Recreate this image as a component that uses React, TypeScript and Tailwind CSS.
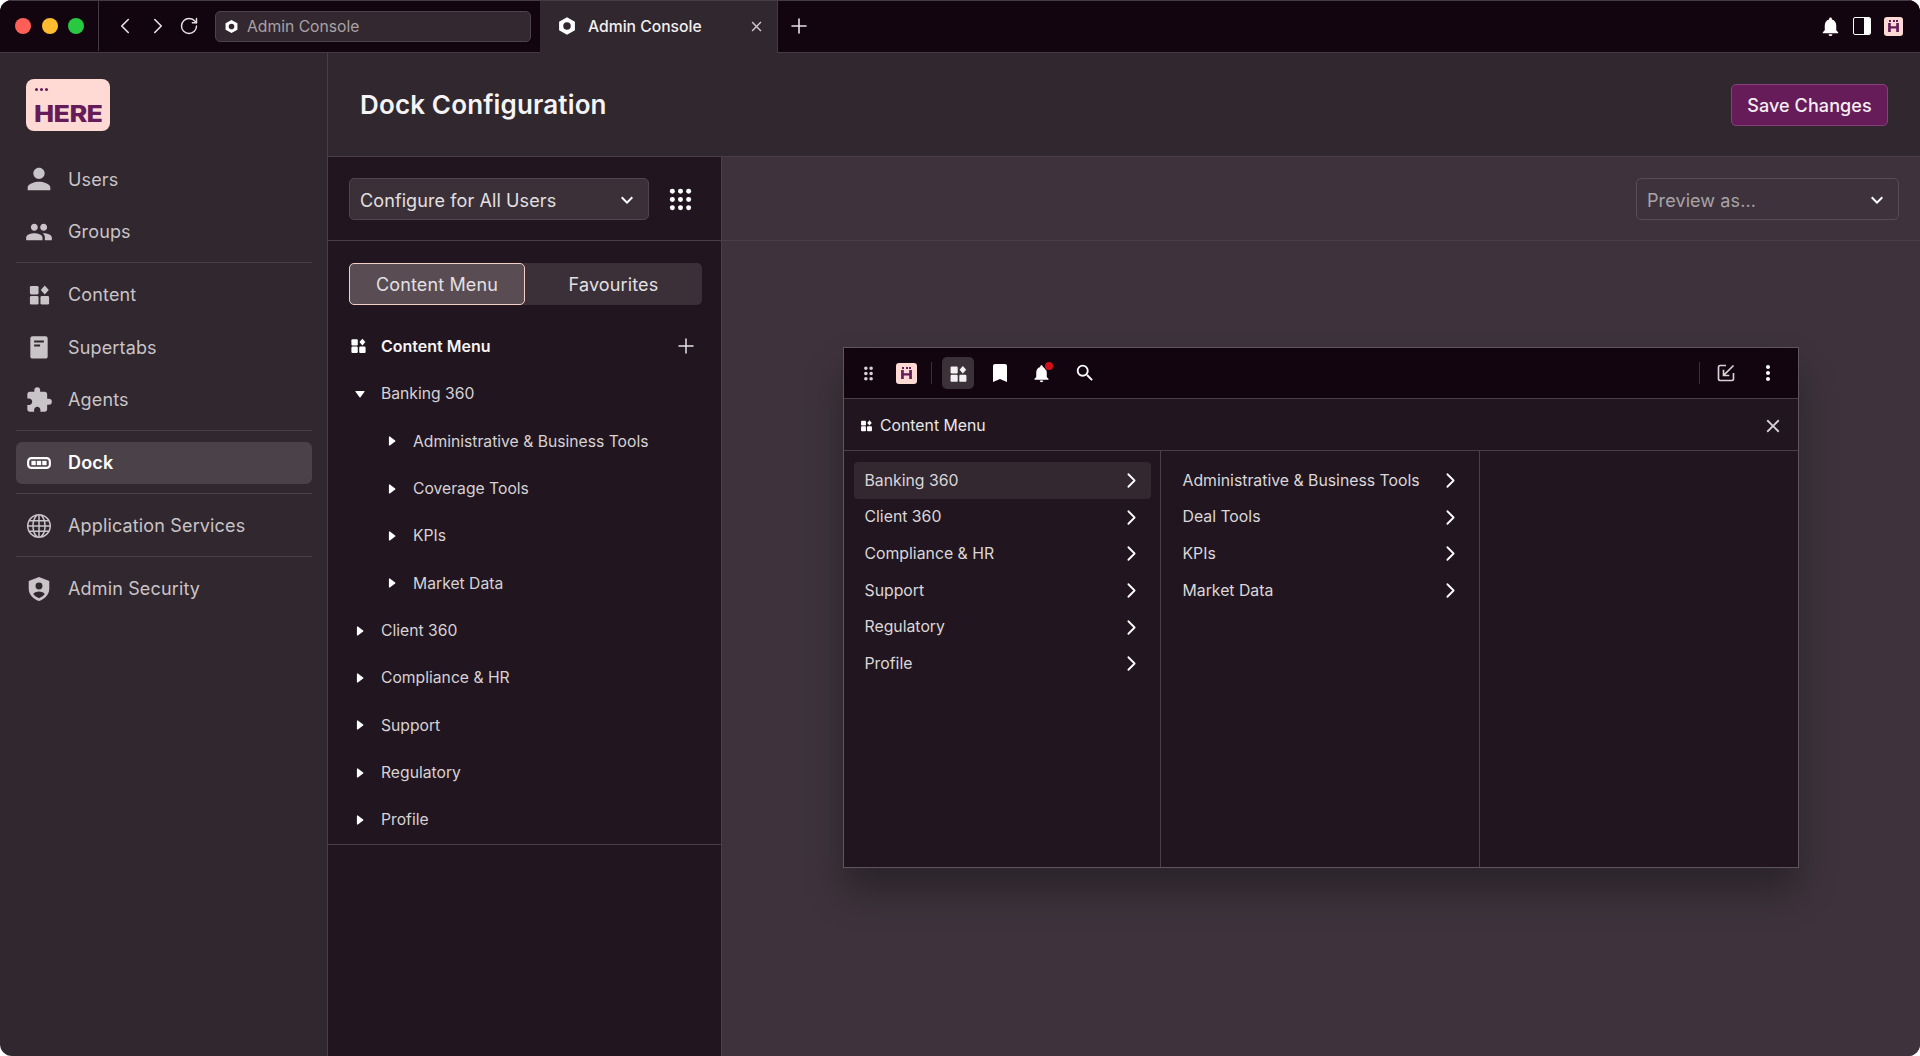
import React from "react";
import {
  MdPerson, MdPeople, MdExtension, MdBookmark, MdNotifications, MdSearch, MdMoreVert, MdDragIndicator,
  MdClose, MdKeyboardArrowDown,
} from "react-icons/md";
import { BsGlobe } from "react-icons/bs";
import { ChevronLeft, ChevronRight, Plus, RotateCw } from "lucide-react";

const Widgets = ({ className = "" }: { className?: string }) => (
  <svg viewBox="0 0 24 24" className={className} fill="currentColor">
    <rect x="2" y="3" width="9" height="9" rx="1.500" />
    <rect x="2" y="13.500" width="9" height="9" rx="1.500" />
    <rect x="13" y="13.500" width="9" height="9" rx="1.500" />
    <path d="M17.500 2.500l4.200 4.700-4.200 4.700-4.200-4.700z" />
  </svg>
);
const Hex = ({ className = "" }: { className?: string }) => (
  <svg viewBox="0 0 24 24" className={className}>
    <path fill="#fff" fillRule="evenodd" d="M12 1.500l9.500 5.300v10.400L12 22.500l-9.500-5.300V6.800zM12 7.500a4.500 4.500 0 100 9 4.500 4.500 0 000-9z" />
  </svg>
);
const Supertabs = ({ className = "" }: { className?: string }) => (
  <svg viewBox="0 0 24 24" className={className} fill="currentColor">
    <path fillRule="evenodd" d="M6 2h12a2 2 0 012 2v17a1.500 1.500 0 01-1.500 1.500h-13A1.500 1.500 0 014 21V4a2 2 0 012-2zm1.500 4v1.800h9V6zm0 3.800v1.700h5.500V9.800z" />
  </svg>
);
const DockIcon = ({ className = "" }: { className?: string }) => (
  <svg viewBox="0 0 24 24" className={className} fill="none">
    <rect x="2" y="7.500" width="20" height="9" rx="3" stroke="currentColor" strokeWidth="2" />
    <rect x="5" y="10" width="4" height="4" fill="currentColor" />
    <rect x="10" y="10" width="4" height="4" fill="currentColor" />
    <rect x="15" y="10" width="4" height="4" fill="currentColor" />
  </svg>
);
const ShieldUser = ({ className = "" }: { className?: string }) => (
  <svg viewBox="0 0 24 24" className={className} fill="currentColor">
    <path fillRule="evenodd" d="M12 1l9.500 3.500v7c0 5.500-4 9.800-9.500 11.500-5.500-1.700-9.500-6-9.500-11.500v-7zm0 5a3.200 3.200 0 100 6.400 3.200 3.200 0 000-6.400zm0 8.200c-2.500 0-4.500 1-5.300 2.500 1.200 1.700 3.100 3 5.300 3.800 2.200-.8 4.100-2.100 5.300-3.800-.8-1.500-2.800-2.500-5.300-2.500z" />
  </svg>
);
const DotGrid = ({ className = "" }: { className?: string }) => (
  <svg viewBox="0 0 24 24" className={className} fill="currentColor">
    {[3.500, 12, 20.500].flatMap((y) =>
      [3.500, 12, 20.500].map((x) => <circle key={`${x}-${y}`} cx={x} cy={y} r="2.600" />)
    )}
  </svg>
);
const Caret = ({ open }: { open?: boolean }) => (
  <svg viewBox="0 0 12 12" className="h-[12px] w-[12px] text-white" fill="currentColor" stroke="currentColor" strokeWidth="1.200" strokeLinejoin="round">
    {open ? <path d="M2 3.500h8L6 8.800z" /> : <path d="M3.500 2v8L8.800 6z" />}
  </svg>
);
const SmallLogo = ({ size }: { size: "s" | "m" }) => (
  <div className={`flex flex-col items-center justify-center rounded-[3px] bg-[#ffd9d3] ${size === "s" ? "h-[19px] w-[19px]" : "h-[21px] w-[21px]"}`}>
    <div className="mb-[1px] flex gap-[1.500px]">
      <span className="h-[2px] w-[2px] bg-[#651c59]" />
      <span className="h-[2px] w-[2px] bg-[#651c59]" />
      <span className="h-[2px] w-[2px] bg-[#651c59]" />
    </div>
    <svg viewBox="0 0 12 10" className="h-[9px] w-[11px]" fill="#651c59">
      <path d="M0 0h3v3.500h6V0h3v10H9V6H3v4H0z" />
    </svg>
  </div>
);
const Divider = () => <div className="-mt-px mb-px ml-4 mr-[15px] h-px shrink-0 bg-[#4a3f48]" />;

const NavItem = ({ icon, label, active }: { icon: React.ReactNode; label: string; active?: boolean }) => (
  <div className={`ml-4 mr-[15px] flex h-[42px] shrink-0 items-center gap-[17px] rounded-md pl-[11px] text-[18px] tracking-[0.15px] ${active ? "bg-[#4b4148] font-semibold text-white" : "text-[#c9c4c8]"}`}>
    <span className="flex h-6 w-6 shrink-0 items-center justify-center [&>svg]:shrink-0">{icon}</span>
    {label}
  </div>
);

const TreeRow = ({ label, level, open }: { label: string; level: number; open?: boolean }) => (
  <div className={`flex h-[47.330px] items-center pt-[3px] text-[15.700px] text-[#d6d2d5] ${level === 0 ? "pl-[20px]" : "pl-[52px]"}`}>
    <span className="mr-[9px] flex h-6 w-6 items-center justify-center">
      <Caret open={open} />
    </span>
    {label}
  </div>
);

const MenuRow = ({ label, active, inset }: { label: string; active?: boolean; inset?: boolean }) => (
  <div className={`flex h-[36.700px] items-center justify-between rounded-[4px] pr-[7px] text-[15.800px] text-[#dad6d9] ${inset ? "pl-[12px]" : "pl-[11px]"} ${active ? "bg-[#33282f]" : ""}`}>
    {label}
    <ChevronRight size={25} strokeWidth={1.700} className="text-white" />
  </div>
);

export default function App() {
  return (
    <div className="h-[1056px] w-[1920px] overflow-hidden bg-white font-['Inter',sans-serif]">
      <div className="flex h-full flex-col overflow-hidden rounded-[12px] bg-[#31272e]">
        {/* browser bar */}
        <div className="flex h-[53px] shrink-0 border-b border-t border-[#453b43] bg-[#130510] pb-px">
          <div className="flex w-[99px] items-center gap-[10.500px] border-r border-[#453b43] pl-[15px]">
            <span className="h-4 w-4 rounded-full bg-[#ff5f57]" />
            <span className="h-4 w-4 rounded-full bg-[#febc2e]" />
            <span className="h-4 w-4 rounded-full bg-[#28c840]" />
          </div>
          <div className="flex w-[441px] items-center">
            <ChevronLeft size={26} strokeWidth={1.500} className="ml-[13px] text-[#e5e2e4]" />
            <ChevronRight size={26} strokeWidth={1.500} className="ml-[7px] text-[#e5e2e4]" />
            <RotateCw size={20} strokeWidth={1.700} className="ml-[8px] mr-[2px] text-[#e5e2e4]" />
            <div className="ml-[14px] flex h-[31px] w-[316px] items-center gap-[8px] rounded-[5px] border border-[#4d434b] bg-[#33282f] pl-[8px] text-[15.700px] text-[#a8a2a6]">
              <Hex className="h-[15px] w-[15px]" />
              <span className="pt-[1px]">Admin Console</span>
            </div>
          </div>
          <div className="-mb-[2px] flex w-[238px] items-center justify-between border-r border-[#453b43] bg-[#31272e] pb-[2px] pl-[17px] pr-[12px] text-[15.700px] font-medium text-[#f1eff0]">
            <div className="flex items-center gap-[11px]">
              <Hex className="h-[20px] w-[20px]" />
              <span className="pt-[1px]">Admin Console</span>
            </div>
            <MdClose size={17} className="text-[#cfcbce]" />
          </div>
          <div className="ml-[9px] flex items-center">
            <Plus size={24} strokeWidth={1.600} className="text-[#e5e2e4]" />
          </div>
          <div className="ml-auto flex items-center pr-[17px]">
            <MdNotifications size={23} className="mr-[11px] text-white" />
            <span className="mr-[13px] flex h-[18px] w-[18px] overflow-hidden rounded-[2px] border-[1.500px] border-white">
              <span className="flex-1" />
              <span className="w-[6px] bg-white" />
            </span>
            <SmallLogo size="s" />
          </div>
        </div>

        <div className="flex min-h-0 flex-1">
          {/* sidebar */}
          <div className="flex w-[328px] shrink-0 flex-col gap-[10px] border-r border-[#4a3f48] pt-[26px]">
            <div className="mb-[17px] ml-[26px] flex h-[52px] w-[84px] flex-col rounded-[8px] bg-[#ffd9d3] pl-[8px] pt-[9px] text-[#651c59]">
              <div className="ml-[1px] flex gap-[2px]">
                <span className="h-[3px] w-[3px] rounded-full bg-[#651c59]" />
                <span className="h-[3px] w-[3px] rounded-full bg-[#651c59]" />
                <span className="h-[3px] w-[3px] rounded-full bg-[#651c59]" />
              </div>
              <span className="mt-[10px] origin-left scale-x-[1.170] text-[23px] font-extrabold leading-[26px] tracking-[-0.500px]">HERE</span>
            </div>
            <div className="flex flex-col gap-[10.500px]">
              <NavItem icon={<MdPerson size={34} />} label="Users" />
              <NavItem icon={<MdPeople size={28} />} label="Groups" />
            </div>
            <Divider />
            <div className="flex flex-col gap-[10.500px]">
              <NavItem icon={<Widgets className="h-[23px] w-[23px]" />} label="Content" />
              <NavItem icon={<Supertabs className="h-[26px] w-[26px]" />} label="Supertabs" />
              <NavItem icon={<MdExtension size={28} />} label="Agents" />
            </div>
            <Divider />
            <NavItem active icon={<DockIcon className="h-[26px] w-[26px] text-white" />} label="Dock" />
            <Divider />
            <NavItem icon={<BsGlobe size={24} />} label="Application Services" />
            <Divider />
            <NavItem icon={<ShieldUser className="h-[26px] w-[26px]" />} label="Admin Security" />
          </div>

          <div className="flex min-w-0 flex-1 flex-col">
            {/* header */}
            <div className="flex h-[104px] shrink-0 items-center justify-between border-b border-[#4a3f48] pl-[32px] pr-[32px]">
              <h1 className="text-[26px] font-semibold tracking-[0.15px] text-[#f5f3f4]">Dock Configuration</h1>
              <button className="flex h-[42px] w-[157px] items-center justify-center rounded-[5px] border border-[#8a3f7d] bg-[#661c58] pt-[2px] text-[18px] font-medium tracking-[0.1px] text-[#f5eef4]">
                Save Changes
              </button>
            </div>

            <div className="flex min-h-0 flex-1">
              {/* left panel */}
              <div className="flex w-[394px] shrink-0 flex-col border-r border-[#4a3f48] bg-[#21161f]">
                <div className="flex h-[84px] shrink-0 items-center border-b border-[#4a3f48] pl-[21px]">
                  <div className="flex h-[42px] w-[300px] items-center justify-between rounded-[5px] border border-[#50454d] bg-[#3b2f38] pl-[10px] pr-[9px] pt-[2px] text-[18px] tracking-[0.1px] text-[#e3e0e2]">
                    <span className="pt-[1px]">Configure for All Users</span>
                    <MdKeyboardArrowDown size={24} className="text-white" />
                  </div>
                  <DotGrid className="ml-[20px] mt-[2px] h-[23px] w-[23px] text-white" />
                </div>
                <div className="ml-[21px] mt-[22px] flex h-[42px] w-[353px] shrink-0 rounded-[5px] bg-[#3b2f38] text-[18px] tracking-[0.15px] text-[#e3e0e2]">
                  <div className="flex w-[176px] items-center justify-center rounded-[5px] border border-[#f2cfc9] bg-[#5a4c53]">Content Menu</div>
                  <div className="flex flex-1 items-center justify-center">Favourites</div>
                </div>
                <div className="mt-[17px] flex h-[47px] shrink-0 items-center pl-[22px] pr-[23px] text-[16px] font-semibold text-[#f5f3f4]">
                  <Widgets className="h-[17px] w-[17px] text-white" />
                  <span className="ml-[14px] flex-1">Content Menu</span>
                  <Plus size={24} strokeWidth={1.500} className="text-[#e5e2e4]" />
                </div>
                <div className="border-b border-[#4a3f48] pb-[2px]">
                  <TreeRow level={0} open label="Banking 360" />
                  <TreeRow level={1} label="Administrative & Business Tools" />
                  <TreeRow level={1} label="Coverage Tools" />
                  <TreeRow level={1} label="KPIs" />
                  <TreeRow level={1} label="Market Data" />
                  <TreeRow level={0} label="Client 360" />
                  <TreeRow level={0} label="Compliance & HR" />
                  <TreeRow level={0} label="Support" />
                  <TreeRow level={0} label="Regulatory" />
                  <TreeRow level={0} label="Profile" />
                </div>
              </div>

              {/* preview */}
              <div className="flex min-w-0 flex-1 flex-col bg-[#3e333c]">
                <div className="flex h-[84px] shrink-0 items-center justify-end border-b border-[#4a3f48] pr-[21px]">
                  <div className="flex h-[42px] w-[263px] items-center justify-between rounded-[5px] border border-[#574d55] pl-[10px] pr-[9px] pt-[2px] text-[18px] tracking-[0.1px] text-[#a9a3a7]">
                    <span className="pt-[1px]">Preview as...</span>
                    <MdKeyboardArrowDown size={24} className="text-white" />
                  </div>
                </div>
                <div className="pl-[121px] pt-[106px]">
                  <div className="flex h-[521px] w-[956px] flex-col border border-[#5f555d] bg-[#21161f] shadow-[0_24px_36px_rgba(0,0,0,0.3)]">
                    {/* dock toolbar */}
                    <div className="flex h-[51px] shrink-0 items-center border-b border-[#4a3f48] bg-[#130510]">
                      <MdDragIndicator size={21} className="ml-[14px] text-[#d6d2d5]" />
                      <div className="ml-[17px]"><SmallLogo size="m" /></div>
                      <span className="ml-[14px] h-[22px] w-px bg-[#3a2f37]" />
                      <span className="ml-[10px] flex h-[32px] w-[32px] items-center justify-center rounded-[5px] bg-[#3b3138]">
                        <Widgets className="h-[19px] w-[19px] text-[#f2f0f1]" />
                      </span>
                      <MdBookmark size={24} className="ml-[14px] text-white" />
                      <span className="relative ml-[19px] flex">
                        <MdNotifications size={21} className="text-white" />
                        <span className="absolute right-[-1px] top-[-1px] h-2 w-2 rounded-full bg-[#d0101a] ring-1 ring-[#130510]" />
                      </span>
                      <MdSearch size={22} className="ml-[22px] text-white" />
                      <span className="ml-auto h-[22px] w-px bg-[#3a2f37]" />
                      <svg viewBox="0 0 24 24" className="ml-[16px] h-[20px] w-[20px] text-[#d6d2d5]" fill="none" stroke="currentColor" strokeWidth="2">
                        <path d="M12 3H5a2 2 0 00-2 2v14a2 2 0 002 2h14a2 2 0 002-2v-7" />
                        <path d="M21 3L10 14M9 8v7h7" />
                      </svg>
                      <MdMoreVert size={24} className="ml-[20px] mr-[18px] text-white" />
                    </div>
                    <div className="flex h-[52px] shrink-0 items-center border-b border-[#4a3f48] pl-[16px] pr-[14px] pt-[2px] text-[15.800px] text-[#e9e6e8]">
                      <Widgets className="h-[13px] w-[13px] text-white" />
                      <span className="ml-[7px] flex-1 pt-[1px]">Content Menu</span>
                      <MdClose size={22} className="text-[#d6d2d5]" />
                    </div>
                    <div className="flex min-h-0 flex-1">
                      <div className="w-[317px] border-r border-[#4a3f48] p-[9.500px] pt-[11px]">
                        <MenuRow active label="Banking 360" />
                        <MenuRow label="Client 360" />
                        <MenuRow label="Compliance & HR" />
                        <MenuRow label="Support" />
                        <MenuRow label="Regulatory" />
                        <MenuRow label="Profile" />
                      </div>
                      <div className="w-[319px] border-r border-[#4a3f48] p-[9.500px] pt-[11px]">
                        <MenuRow inset label="Administrative & Business Tools" />
                        <MenuRow inset label="Deal Tools" />
                        <MenuRow inset label="KPIs" />
                        <MenuRow inset label="Market Data" />
                      </div>
                      <div className="flex-1" />
                    </div>
                  </div>
                </div>
              </div>
            </div>
          </div>
        </div>
      </div>
    </div>
  );
}
